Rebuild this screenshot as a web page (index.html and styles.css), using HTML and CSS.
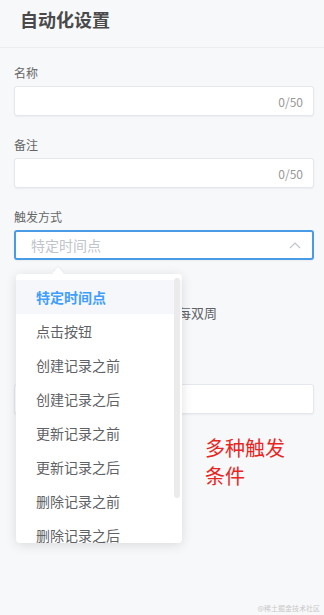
FILE: index.html
```html
<!DOCTYPE html>
<html lang="zh">
<head>
    <meta charset="UTF-8">
    <meta name="viewport" content="width=device-width, initial-scale=1.0">
    <title>自动化设置</title>
    <link rel="stylesheet" href="styles.css">
</head>
<body>
    <header class="page-header">
        <h1>自动化设置</h1>
    </header>

    <form class="form">
        <div class="field">
            <label class="field-label">名称</label>
            <div class="input">
                <span class="counter">0/50</span>
            </div>
        </div>

        <div class="field">
            <label class="field-label">备注</label>
            <div class="input">
                <span class="counter">0/50</span>
            </div>
        </div>

        <div class="field">
            <label class="field-label">触发方式</label>
            <div class="select">
                <div class="input input-focus">
                    <span class="placeholder">特定时间点</span>
                    <svg class="chevron" width="12" height="8" viewBox="0 0 12 8">
                        <polyline points="1,7 6,2 11,7" fill="none" stroke="#c0c4cc" stroke-width="1.2"/>
                    </svg>
                </div>

                <!-- 下拉菜单 -->
                <div class="dropdown">
                    <div class="dropdown-arrow"></div>
                    <ul class="dropdown-list">
                        <li class="option selected">特定时间点</li>
                        <li class="option">点击按钮</li>
                        <li class="option">创建记录之前</li>
                        <li class="option">创建记录之后</li>
                        <li class="option">更新记录之前</li>
                        <li class="option">更新记录之后</li>
                        <li class="option">删除记录之前</li>
                        <li class="option">删除记录之后</li>
                    </ul>
                    <div class="scrollbar"></div>
                </div>
            </div>
        </div>

        <!-- 被下拉菜单遮住的部分 -->
        <div class="field field-hidden">
            <div class="radio-row">
                <span class="radio"><i></i>每双周</span>
            </div>
        </div>

        <div class="field field-time">
            <div class="input"></div>
        </div>
    </form>

    <p class="note">多种触发条件</p>
    <span class="watermark">@稀土掘金技术社区</span>
</body>
</html>
```

FILE: styles.css
```css
body {
    font-family: "Noto Sans CJK SC", "Noto Sans", sans-serif;
    background: #f7f8fa;
    color: #606266;
    margin: 0;
    height: 615px;
    position: relative;
    overflow: hidden;
}

.page-header {
    height: 47px;
    border-bottom: 1px solid #ebedf0;
    padding-left: 20px;
}

.page-header h1 {
    margin: 0;
    padding-top: 5px;
    font-size: 18px;
    line-height: 28px;
    font-weight: bold;
    color: #4a4a4a;
}

.form {
    padding: 16px 10px 0 14px;
}

.field {
    margin-bottom: 20px;
}

.field-label {
    display: block;
    font-size: 12px;
    line-height: 18px;
    margin-bottom: 4px;
    color: #666;
}

.input {
    height: 28px;
    background: #fff;
    border: 1px solid #e4e7ed;
    border-radius: 3px;
    box-shadow: 0 1px 2px rgba(0, 0, 0, 0.05);
    display: flex;
    align-items: center;
    justify-content: flex-end;
    padding: 0 10px 0 16px;
}

.counter {
    font-size: 12px;
    color: #999;
}

.select {
    position: relative;
}

.input-focus {
    border: 2px solid #4a9be6;
    height: 26px;
    padding: 0 10px 0 15px;
    justify-content: space-between;
}

.placeholder {
    font-size: 14px;
    color: #c0c4cc;
}

.chevron {
    margin-right: 1px;
}

.dropdown {
    position: absolute;
    left: 2px;
    top: calc(100% + 14px);
    width: 166px;
    height: 269px;
    background: #fff;
    border-radius: 4px;
    box-shadow: 0 2px 12px rgba(0, 0, 0, 0.12);
    z-index: 10;
}

.dropdown-arrow {
    position: absolute;
    top: -5px;
    left: 38px;
    width: 8px;
    height: 8px;
    background: #fff;
    transform: rotate(45deg);
    box-shadow: -1px -1px 2px rgba(0, 0, 0, 0.04);
}

.dropdown-list {
    list-style: none;
    margin: 0;
    padding: 6px 0 0;
    height: 263px;
    overflow: hidden;
    position: relative;
    border-radius: 4px;
}

.option {
    height: 34px;
    line-height: 34px;
    padding-left: 20px;
    font-size: 14px;
    color: #606266;
}

.option.selected {
    background: #f5f7fa;
    color: #409eff;
    font-weight: bold;
}

.scrollbar {
    position: absolute;
    right: 2px;
    top: 4px;
    width: 6px;
    height: 220px;
    border-radius: 3px;
    background: #ebebeb;
}

.field-hidden {
    padding-top: 22px;
    margin-bottom: 0;
}

.radio-row {
    display: flex;
    padding-left: 147px;
    font-size: 13px;
    line-height: 22px;
}

.radio {
    display: flex;
    align-items: center;
    gap: 5px;
}

.radio i {
    width: 12px;
    height: 12px;
    border: 1px solid #dcdfe6;
    border-radius: 50%;
    background: #fff;
    box-sizing: border-box;
}

.field-time {
    padding-top: 60px;
}

.note {
    position: absolute;
    left: 205px;
    top: 434px;
    width: 90px;
    margin: 0;
    font-size: 20px;
    line-height: 28px;
    color: #e8261f;
}

.watermark {
    position: absolute;
    right: 4px;
    bottom: 2px;
    font-size: 7px;
    color: #c8c8c8;
}
```
